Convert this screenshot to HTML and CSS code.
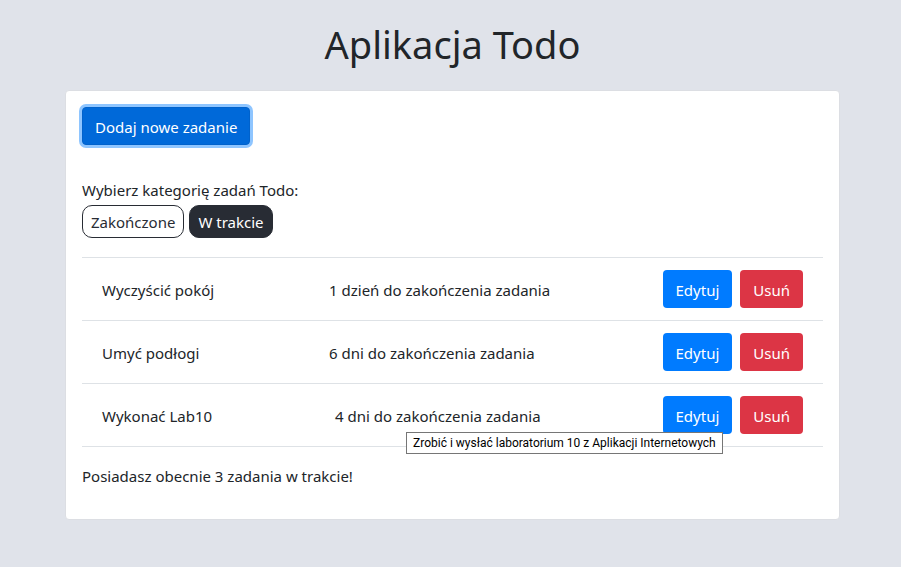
FILE: index.html
```html
<!DOCTYPE html>
<html lang="pl">
<head>
<meta charset="utf-8">
<title>Aplikacja Todo</title>
<link rel="stylesheet" href="styles.css">
</head>
<body>
<h1>Aplikacja Todo</h1>
<main class="card">
  <button class="btn primary active" type="button">Dodaj nowe zadanie</button>
  <section class="filters">
    <p>Wybierz kategorię zadań Todo:</p>
    <div class="pills">
      <button class="pill" type="button">Zakończone</button>
      <button class="pill selected" type="button">W trakcie</button>
    </div>
  </section>
  <ul class="tasks">
    <li class="task">
      <span class="name">Wyczyścić pokój</span>
      <span class="due">1 dzień do zakończenia zadania</span>
      <span class="actions"><button class="btn primary" type="button">Edytuj</button><button class="btn danger" type="button">Usuń</button></span>
    </li>
    <li class="task">
      <span class="name">Umyć podłogi</span>
      <span class="due">6 dni do zakończenia zadania</span>
      <span class="actions"><button class="btn primary" type="button">Edytuj</button><button class="btn danger" type="button">Usuń</button></span>
    </li>
    <li class="task">
      <span class="name">Wykonać Lab10</span>
      <span class="due shifted">4 dni do zakończenia zadania</span>
      <span class="actions"><button class="btn primary" type="button">Edytuj</button><button class="btn danger" type="button">Usuń</button></span>
      <span class="tooltip" role="tooltip">Zrobić i wysłać laboratorium 10 z Aplikacji Internetowych</span>
    </li>
  </ul>
  <p class="summary">Posiadasz obecnie 3 zadania w trakcie!</p>
</main>
</body>
</html>
```
FILE: styles.css
```css
* { box-sizing: border-box; }
body {
  margin: 0;
  padding: 20px 61px 47px 65px;
  background: #e0e3ea;
  color: #212529;
  font: 15px/24px "Noto Sans", "Open Sans", sans-serif;
}
h1 {
  margin: 0 0 22px;
  font-size: 38px;
  line-height: 48px;
  font-weight: 400;
  text-align: center;
}
p { margin: 0; }
button { font: inherit; cursor: pointer; }
.card {
  padding: 16px 16px 30px;
  background: #fff;
  border: 1px solid #dcdee3;
  border-radius: 4px;
}
.btn {
  height: 38px;
  padding: 2px 12px 0;
  border: 1px solid transparent;
  border-radius: 4px;
  color: #fff;
}
.primary { background: #007bff; }
.danger { background: #dc3545; }
.active {
  background: #0069d9;
  border-color: #0062cc;
  box-shadow: 0 0 0 3px #8ec5ff;
}
.filters { margin-top: 33px; }
.pills { display: flex; gap: 5px; margin-top: 3px; }
.pill {
  height: 33px;
  padding: 1px 8px 0;
  border: 1px solid #282c34;
  border-radius: 10px;
  background: #fff;
  color: #282c34;
}
.selected { background: #282c34; color: #fff; }
.tasks {
  margin: 19px 0 17px;
  padding: 0;
  list-style: none;
  border-bottom: 1px solid #dee2e6;
}
.summary { padding-bottom: 1px; }
.task {
  position: relative;
  display: grid;
  grid-template-columns: 227px 1fr auto;
  align-items: center;
  padding: 12px 20px;
  border-top: 1px solid #dee2e6;
}
.name, .due { padding-top: 2px; }
.shifted { padding-left: 6px; }
.actions { display: flex; gap: 8px; }
.tooltip {
  position: absolute;
  top: 48px;
  left: 324px;
  padding: 1px 6px 0;
  border: 1px solid #767676;
  background: #fff;
  color: #000;
  font-family: Roboto, sans-serif;
  font-size: 12px;
  line-height: 19px;
  white-space: nowrap;
}
```
